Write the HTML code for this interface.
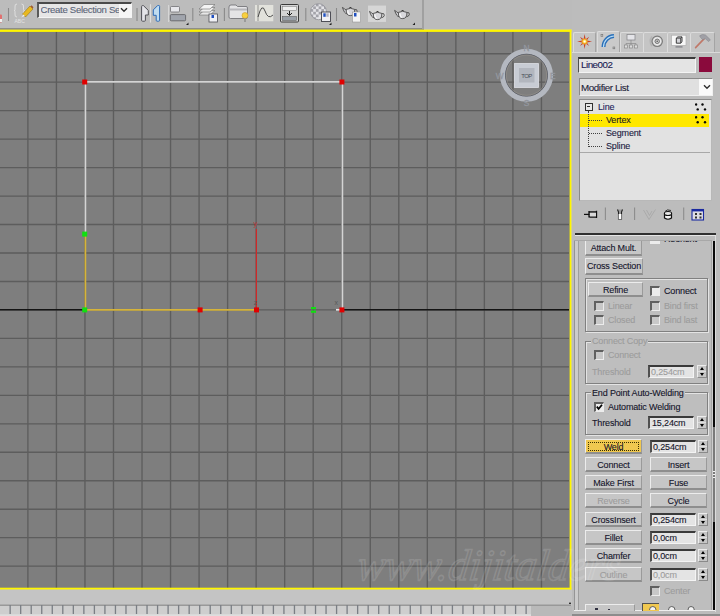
<!DOCTYPE html>
<html><head><meta charset="utf-8">
<style>
html,body{margin:0;padding:0;}
body{width:720px;height:616px;overflow:hidden;position:relative;background:#c3c3c3;font-family:"Liberation Sans",sans-serif;}
.a{position:absolute;}
.vp{position:absolute;left:0;top:0;}
.t{position:absolute;-webkit-text-stroke:0.1px currentColor;font-size:9px;letter-spacing:-0.15px;line-height:11px;white-space:nowrap;color:#14142a;}
.t.dis,.btn.dis{color:#9c9c9c;}
.lbl{background:#bebebe;padding:0 1px;}
.tab{position:absolute;background:#c5c5c5;border-top:1px solid #dcdcdc;border-left:1px solid #dcdcdc;border-right:1px solid #a4a4a4;border-radius:2px 2px 0 0;}
.tab.act{background:#cacaca;}
.fld{background:#e4e4e4;border-top:2px solid #3a3a3a;border-left:2px solid #505050;border-bottom:1px solid #f4f4f4;border-right:1px solid #f4f4f4;box-sizing:content-box;}
.btn{position:absolute;background:#c6c6c6;border-top:1px solid #ececec;border-left:1px solid #ececec;border-bottom:2px solid #8e8e8e;border-right:1px solid #9a9a9a;-webkit-text-stroke:0.1px currentColor;font-size:9px;letter-spacing:-0.15px;line-height:14px;text-align:center;color:#14142a;white-space:nowrap;overflow:hidden;}
.btn.weld{background:#f0c850;}
.btn.weld::after{content:"";position:absolute;left:2px;top:2px;right:2px;bottom:1px;border:1px dotted #3a3000;}
.grp{position:absolute;border:1px solid #808080;box-shadow:inset 1px 1px 0 #e4e4e4, 1px 1px 0 #e4e4e4;}
.chk{position:absolute;width:8px;height:8px;background:#c8c8c8;border-top:2px solid #606060;border-left:2px solid #606060;border-bottom:1px solid #ececec;border-right:1px solid #ececec;box-sizing:content-box;width:7px;height:7px;}
.chk.on{background:#ececec;}
.spn{position:absolute;width:8px;height:11px;background:#c6c6c6;border-top:1px solid #ececec;border-left:1px solid #ececec;border-right:1px solid #8a8a8a;border-bottom:1px solid #8a8a8a;}
.spn i{position:absolute;left:0;top:5px;width:8px;height:1px;background:#dedede;}
.spn::before{content:"";position:absolute;left:1.5px;top:1px;border-left:2.5px solid transparent;border-right:2.5px solid transparent;border-bottom:3px solid #000;}
.spn::after{content:"";position:absolute;left:1.5px;top:7px;border-left:2.5px solid transparent;border-right:2.5px solid transparent;border-top:3px solid #000;}

</style></head><body>
<div class="a" style="left:0;top:0;width:424px;height:29px;background:#bcbcbc;"></div>
<div class="a" style="left:0;top:28.3px;width:424px;height:1.4px;background:#8e8e88;"></div>
<div class="a" style="left:422px;top:0;width:1.5px;height:29px;background:#a0a0a0;"></div>
<div class="a" style="left:424px;top:0;width:148px;height:29px;background:#bbbbbb;"></div>
<svg class="a" style="left:0;top:0;" width="424" height="29" viewBox="0 0 424 29">
<rect x="-1" y="14.5" width="3" height="8" rx="1" fill="#e07070"/><rect x="-1" y="19" width="3" height="3" fill="#f0f0f0"/>
<g stroke="#8a8a8a" stroke-width="1.1"><line x1="8.5" y1="8" x2="8.5" y2="21"/><line x1="137" y1="8" x2="137" y2="21"/><line x1="168.6" y1="5" x2="168.6" y2="22" stroke="#d8d8d8"/><line x1="150.5" y1="4.2" x2="150.5" y2="22.6" stroke="#dedede"/><line x1="192.8" y1="8" x2="192.8" y2="21"/><line x1="224.4" y1="8" x2="224.4" y2="21"/><line x1="305.8" y1="8" x2="305.8" y2="21"/><line x1="336.5" y1="8" x2="336.5" y2="21"/></g>
<!-- braces ABC pencil -->
<path d="M17 4 Q14.5 4 15 7 V9.5 Q15 10.5 14 10.5 Q15 10.5 15 11.5 V14 Q14.5 17 17 17 M21.5 4 Q24 4 23.5 7 V9.5 Q23.5 10.5 24.5 10.5 Q23.5 10.5 23.5 11.5 V14 Q24 17 21.5 17" stroke="#e2e2e2" stroke-width="0.9" fill="none"/>
<text x="14.5" y="22.6" font-size="5" fill="#e4e4e4" font-family="Liberation Sans">ABC</text>
<path d="M22.5 14 L30 6 L33 9 L25.5 17 Z" fill="#e8b820" stroke="#8a6a10" stroke-width="0.5"/>
<path d="M30.5 6.5 L31.5 5.2 L33.5 7.2 L32.5 8.5 Z" fill="#a05a30"/>
<path d="M23 14.5 L22.5 16.5 L25 16 Z" fill="#f4f4f4"/>
<!-- mirror icons -->
<path d="M141.6 6.4 Q141.6 5.6 142.6 5.6 H143.4 L148.3 10.4 V15 H145.4 V20.3 Q145.4 21.2 144.5 21.2 H142.5 Q141.6 21.2 141.6 20.3 Z" fill="#e4e4e8" stroke="#505056" stroke-width="1"/>
<path d="M159.6 6.3 Q159.6 5.5 158.6 5.5 H157.7 L153.3 9.9 V15.3 H156.2 V20.3 Q156.2 21.2 157.1 21.2 H158.7 Q159.6 21.2 159.6 20.3 Z" fill="#c0dcf0" stroke="#2a6ab8" stroke-width="1"/>
<!-- align -->
<rect x="170.5" y="6.5" width="9" height="5.5" rx="1" fill="#e8e8ec" stroke="#707074" stroke-width="0.8"/>
<rect x="170.3" y="14.6" width="15.3" height="6.2" rx="1" fill="#a0a4ac" stroke="#5a5a60" stroke-width="0.8"/>
<path d="M186 25 L188.5 22.5 V25 Z" fill="#202020"/>
<!-- layers -->
<path d="M199 15 L204 10.5 H215 L210 15 Z" fill="#e8e8e8" stroke="#707070" stroke-width="0.6"/>
<path d="M199 12 L204 7.5 H215 L210 12 Z" fill="#f0f0f0" stroke="#707070" stroke-width="0.6"/>
<path d="M199 9 L204 4.5 H215 L210 9 Z" fill="#f4f4f4" stroke="#707070" stroke-width="0.6"/>
<rect x="209" y="14" width="8.5" height="8" fill="#f0f0f4" stroke="#505058" stroke-width="0.8"/>
<rect x="211.5" y="15" width="2.5" height="3" fill="#2050c0"/>
<!-- folder bulb -->
<path d="M229 7 Q229 5 231 5 H236 L237.5 6.5 H246 Q247.5 6.5 247.5 8 V17 Q247.5 18.5 246 18.5 H230.5 Q229 18.5 229 17 Z" fill="#e4e4e6" stroke="#6a6a6e" stroke-width="0.8"/>
<rect x="229.5" y="8.5" width="17.5" height="2" fill="#b8b8bc"/>
<circle cx="245" cy="15.5" r="3" fill="#f8d040" stroke="#c09020" stroke-width="0.5"/>
<rect x="244" y="18.5" width="2" height="3.5" fill="#9a9a9a"/>
<!-- curve editor -->
<rect x="255" y="5" width="18.3" height="16.3" fill="#e2e2dc"/>
<line x1="258" y1="5" x2="258" y2="21" stroke="#606060" stroke-width="0.6"/>
<path d="M258 17 Q262 2 265 11 Q268 20 273 15" stroke="#404040" stroke-width="0.9" fill="none"/>
<!-- schematic -->
<rect x="280.5" y="4.5" width="18" height="17.5" rx="1" fill="#d4d4d4" stroke="#3a3a3a" stroke-width="1"/>
<rect x="282.5" y="6.5" width="14" height="4" fill="#f0f0f0" stroke="#707070" stroke-width="0.5"/>
<rect x="282.5" y="16.5" width="14" height="4" fill="#9aa0a8" stroke="#505050" stroke-width="0.5"/>
<path d="M289.5 11 V15 M287 13 L289.5 15.5 L292 13" stroke="#202020" stroke-width="1" fill="none"/>
<!-- material sphere -->
<defs><clipPath id="sph"><circle cx="318.5" cy="11.7" r="8"/></clipPath></defs>
<circle cx="318.5" cy="11.7" r="8" fill="#e4e4e8"/>
<g clip-path="url(#sph)" fill="#8e8e96" opacity="0.75">
<rect x="310.5" y="3.7" width="2.7" height="2.7"/><rect x="315.9" y="3.7" width="2.7" height="2.7"/><rect x="321.3" y="3.7" width="2.7" height="2.7"/>
<rect x="313.2" y="6.4" width="2.7" height="2.7"/><rect x="318.6" y="6.4" width="2.7" height="2.7"/><rect x="324" y="6.4" width="2.7" height="2.7"/>
<rect x="310.5" y="9.1" width="2.7" height="2.7"/><rect x="315.9" y="9.1" width="2.7" height="2.7"/><rect x="321.3" y="9.1" width="2.7" height="2.7"/>
<rect x="313.2" y="11.8" width="2.7" height="2.7"/><rect x="318.6" y="11.8" width="2.7" height="2.7"/>
<rect x="310.5" y="14.5" width="2.7" height="2.7"/><rect x="315.9" y="14.5" width="2.7" height="2.7"/>
<rect x="313.2" y="17.2" width="2.7" height="2.7"/>
</g>
<circle cx="318.5" cy="11.7" r="8" fill="none" stroke="#8a8a90" stroke-width="0.7"/>
<rect x="321.5" y="12" width="9" height="9.5" fill="#f0f0f4" stroke="#404048" stroke-width="0.9"/>
<rect x="323.3" y="13.3" width="2.4" height="3.5" fill="#2050c0"/><rect x="326.3" y="13.3" width="2.4" height="3.5" fill="#b0b0c0"/>
<path d="M329 25 L331.5 22.5 V25 Z" fill="#202020"/>
<!-- teapots -->
<g transform="translate(341.8,3.8)"><path d="M4.6 6.5 Q2.8 5 0.6 3.6 Q1.6 6.5 2.8 8.5 Q3.8 9.8 5.2 10" stroke="#4a4a4a" stroke-width="0.9" fill="#d0d0d4"/><path d="M12.6 5.8 Q15.6 5 15.4 7.6 Q15 9.6 12.4 10" stroke="#4a4a4a" stroke-width="0.9" fill="none"/><path d="M4.4 5.6 Q4 11.8 8.6 11.8 Q13.2 11.8 12.9 5.6 Q8.6 3.4 4.4 5.6 Z" fill="#d8d8dc" stroke="#4a4a4a" stroke-width="0.9"/><path d="M6 6.5 Q5.8 9.8 8 10.8" stroke="#fafafa" stroke-width="1.1" fill="none"/><path d="M7.2 4.3 Q8.6 2.2 10 4.3 Z" fill="#303030"/></g>
<rect x="352.5" y="12" width="8" height="10" fill="#f4f4f4" stroke="#8a8a8a" stroke-width="0.5"/>
<rect x="354" y="13" width="2.5" height="3.5" fill="#2050c0"/>
<rect x="368" y="5.6" width="18" height="16.3" fill="#d6d6d6"/>
<g transform="translate(368.9,7.8)"><path d="M4.6 6.5 Q2.8 5 0.6 3.6 Q1.6 6.5 2.8 8.5 Q3.8 9.8 5.2 10" stroke="#4a4a4a" stroke-width="0.9" fill="#d0d0d4"/><path d="M12.6 5.8 Q15.6 5 15.4 7.6 Q15 9.6 12.4 10" stroke="#4a4a4a" stroke-width="0.9" fill="none"/><path d="M4.4 5.6 Q4 11.8 8.6 11.8 Q13.2 11.8 12.9 5.6 Q8.6 3.4 4.4 5.6 Z" fill="#d8d8dc" stroke="#4a4a4a" stroke-width="0.9"/><path d="M6 6.5 Q5.8 9.8 8 10.8" stroke="#fafafa" stroke-width="1.1" fill="none"/><path d="M7.2 4.3 Q8.6 2.2 10 4.3 Z" fill="#303030"/></g>
<g transform="translate(394,6.8)"><path d="M4.6 6.5 Q2.8 5 0.6 3.6 Q1.6 6.5 2.8 8.5 Q3.8 9.8 5.2 10" stroke="#4a4a4a" stroke-width="0.9" fill="#d0d0d4"/><path d="M12.6 5.8 Q15.6 5 15.4 7.6 Q15 9.6 12.4 10" stroke="#4a4a4a" stroke-width="0.9" fill="none"/><path d="M4.4 5.6 Q4 11.8 8.6 11.8 Q13.2 11.8 12.9 5.6 Q8.6 3.4 4.4 5.6 Z" fill="#d8d8dc" stroke="#4a4a4a" stroke-width="0.9"/><path d="M6 6.5 Q5.8 9.8 8 10.8" stroke="#fafafa" stroke-width="1.1" fill="none"/><path d="M7.2 4.3 Q8.6 2.2 10 4.3 Z" fill="#303030"/></g>
<path d="M412.5 25 L415 22.5 V25 Z" fill="#202020"/>
</svg>
<!-- dropdown -->
<div class="a" style="left:36.5px;top:2px;width:95px;height:16px;background:#e6e6e6;border-top:2px solid #4a4a4a;border-left:2px solid #5a5a5a;border-bottom:1px solid #f4f4f4;border-right:1px solid #f4f4f4;box-sizing:border-box;"><span class="t" style="left:2px;top:0px;color:#5a6478;font-size:9.6px;letter-spacing:-0.3px;width:78px;overflow:hidden;">Create Selection Se</span>
<div class="a" style="left:80px;top:0;width:13px;height:13px;background:#f6f6f6;"></div></div>
<svg class="a" style="left:120px;top:7px;" width="8" height="6" viewBox="0 0 8 6"><path d="M1 1.2 L4 4.2 L7 1.2" stroke="#303030" stroke-width="1.4" fill="none"/></svg>
<svg class="vp" width="720" height="616" viewBox="0 0 720 616">
<rect x="0" y="31" width="570" height="558" fill="#7e7e7e"/>
<g stroke="#5d5d5d" stroke-width="1.35">
<line x1="27.90" y1="31" x2="27.90" y2="588"/>
<line x1="56.43" y1="31" x2="56.43" y2="588"/>
<line x1="84.96" y1="31" x2="84.96" y2="588"/>
<line x1="113.49" y1="31" x2="113.49" y2="588"/>
<line x1="142.02" y1="31" x2="142.02" y2="588"/>
<line x1="170.55" y1="31" x2="170.55" y2="588"/>
<line x1="199.08" y1="31" x2="199.08" y2="588"/>
<line x1="227.61" y1="31" x2="227.61" y2="588"/>
<line x1="256.14" y1="31" x2="256.14" y2="588"/>
<line x1="284.67" y1="31" x2="284.67" y2="588"/>
<line x1="313.20" y1="31" x2="313.20" y2="588"/>
<line x1="341.73" y1="31" x2="341.73" y2="588"/>
<line x1="370.26" y1="31" x2="370.26" y2="588"/>
<line x1="398.79" y1="31" x2="398.79" y2="588"/>
<line x1="427.32" y1="31" x2="427.32" y2="588"/>
<line x1="455.85" y1="31" x2="455.85" y2="588"/>
<line x1="484.38" y1="31" x2="484.38" y2="588"/>
<line x1="512.91" y1="31" x2="512.91" y2="588"/>
<line x1="541.44" y1="31" x2="541.44" y2="588"/>
<line x1="0" y1="53.70" x2="569" y2="53.70"/>
<line x1="0" y1="82.17" x2="569" y2="82.17"/>
<line x1="0" y1="110.64" x2="569" y2="110.64"/>
<line x1="0" y1="139.11" x2="569" y2="139.11"/>
<line x1="0" y1="167.58" x2="569" y2="167.58"/>
<line x1="0" y1="196.05" x2="569" y2="196.05"/>
<line x1="0" y1="224.52" x2="569" y2="224.52"/>
<line x1="0" y1="252.99" x2="569" y2="252.99"/>
<line x1="0" y1="281.46" x2="569" y2="281.46"/>
<line x1="0" y1="309.93" x2="569" y2="309.93"/>
<line x1="0" y1="338.40" x2="569" y2="338.40"/>
<line x1="0" y1="366.87" x2="569" y2="366.87"/>
<line x1="0" y1="395.34" x2="569" y2="395.34"/>
<line x1="0" y1="423.81" x2="569" y2="423.81"/>
<line x1="0" y1="452.28" x2="569" y2="452.28"/>
<line x1="0" y1="480.75" x2="569" y2="480.75"/>
<line x1="0" y1="509.22" x2="569" y2="509.22"/>
<line x1="0" y1="537.69" x2="569" y2="537.69"/>
<line x1="0" y1="566.16" x2="569" y2="566.16"/>
</g>
<!-- x axis -->
<line x1="0" y1="309.8" x2="84" y2="309.8" stroke="#141414" stroke-width="1.6"/>
<line x1="342" y1="309.8" x2="569" y2="309.8" stroke="#141414" stroke-width="1.6"/>
<!-- shape -->
<g stroke-width="1.7" fill="none">
<line x1="85.4" y1="81.8" x2="342.2" y2="81.8" stroke="#d4d4d4"/>
<line x1="342.4" y1="81.8" x2="342.4" y2="309" stroke="#d4d4d4"/>
<line x1="85.4" y1="81.8" x2="85.4" y2="234" stroke="#d4d4d4"/>
<line x1="85.4" y1="234" x2="85.4" y2="310" stroke="#d6b43a"/>
<line x1="85.4" y1="309.8" x2="256" y2="309.8" stroke="#d6b43a"/>
<line x1="336" y1="309.8" x2="341" y2="309.8" stroke="#e8e8e8"/>
</g>
<line x1="256.4" y1="229" x2="256.4" y2="309" stroke="#d02828" stroke-width="1.2"/>
<g fill="#e00000">
<rect x="82.2" y="79.5" width="5" height="5"/>
<rect x="339.4" y="79.5" width="5" height="5"/>
<rect x="339.4" y="307.4" width="5" height="5"/>
<rect x="254" y="307.4" width="5" height="5"/>
<rect x="197.6" y="307.4" width="5" height="5"/>
</g>
<g fill="#10e010">
<rect x="82.2" y="231.6" width="5" height="5"/>
<rect x="82.2" y="307.4" width="5" height="5"/>
<rect x="311" y="307" width="5" height="2.2"/>
<rect x="311" y="310.6" width="5" height="2.2"/>
</g>
<g font-family="Liberation Sans" font-size="7">
<text x="253.5" y="225.5" fill="#c03030">y</text>
<text x="253.8" y="304.5" fill="#5a5a5a">z</text>
<text x="334.5" y="305" fill="#5a5a5a">x</text>
</g>

<!-- bottom time slider -->
<rect x="0" y="589.5" width="572" height="27" fill="#c4c4c4"/>
<rect x="0" y="605.6" width="531" height="8.6" fill="#cecece"/>
<rect x="531" y="605.6" width="41" height="10.4" fill="#b9b9b9"/>
<rect x="0" y="604.6" width="571" height="1.2" fill="#8e8e8e"/>
<rect x="0" y="614.2" width="531" height="2" fill="#dedede"/>
<g fill="#7a7e84"><rect x="9.50" y="605" width="1.3" height="9" /><rect x="20.03" y="605" width="1.3" height="9" /><rect x="30.56" y="605" width="1.3" height="9" /><rect x="41.09" y="605" width="1.3" height="9" /><rect x="51.62" y="605" width="1.3" height="9" /><rect x="62.15" y="605" width="1.3" height="9" /><rect x="72.68" y="605" width="1.3" height="9" /><rect x="83.21" y="605" width="1.3" height="9" /><rect x="93.74" y="605" width="1.3" height="9" /><rect x="104.27" y="605" width="1.3" height="9" /><rect x="114.80" y="605" width="1.3" height="9" /><rect x="125.33" y="605" width="1.3" height="9" /><rect x="135.86" y="605" width="1.3" height="9" /><rect x="146.39" y="605" width="1.3" height="9" /><rect x="156.92" y="605" width="1.3" height="9" /><rect x="167.45" y="605" width="1.3" height="9" /><rect x="177.98" y="605" width="1.3" height="9" /><rect x="188.51" y="605" width="1.3" height="9" /><rect x="199.04" y="605" width="1.3" height="9" /><rect x="209.57" y="605" width="1.3" height="9" /><rect x="220.10" y="605" width="1.3" height="9" /><rect x="230.63" y="605" width="1.3" height="9" /><rect x="241.16" y="605" width="1.3" height="9" /><rect x="251.69" y="605" width="1.3" height="9" /><rect x="262.22" y="605" width="1.3" height="9" /><rect x="272.75" y="605" width="1.3" height="9" /><rect x="283.28" y="605" width="1.3" height="9" /><rect x="293.81" y="605" width="1.3" height="9" /><rect x="304.34" y="605" width="1.3" height="9" /><rect x="314.87" y="605" width="1.3" height="9" /><rect x="325.40" y="605" width="1.3" height="9" /><rect x="335.93" y="605" width="1.3" height="9" /><rect x="346.46" y="605" width="1.3" height="9" /><rect x="356.99" y="605" width="1.3" height="9" /><rect x="367.52" y="605" width="1.3" height="9" /><rect x="378.05" y="605" width="1.3" height="9" /><rect x="388.58" y="605" width="1.3" height="9" /><rect x="399.11" y="605" width="1.3" height="9" /><rect x="409.64" y="605" width="1.3" height="9" /><rect x="420.17" y="605" width="1.3" height="9" /><rect x="430.70" y="605" width="1.3" height="9" /><rect x="441.23" y="605" width="1.3" height="9" /><rect x="451.76" y="605" width="1.3" height="9" /><rect x="462.29" y="605" width="1.3" height="9" /><rect x="472.82" y="605" width="1.3" height="9" /><rect x="483.35" y="605" width="1.3" height="9" /><rect x="493.88" y="605" width="1.3" height="9" /><rect x="504.41" y="605" width="1.3" height="9" /><rect x="514.94" y="605" width="1.3" height="9" /><rect x="525.47" y="605" width="1.3" height="9" /></g>
<rect x="569" y="602.6" width="2" height="1.4" fill="#303030"/>
<!-- viewcube -->
<g transform="translate(526.5,75.2)">
<circle r="23.8" fill="none" stroke="#b4b8c0" stroke-width="5.4"/>
<circle r="21" fill="none" stroke="#5a5e66" stroke-width="0.9"/>
<circle r="20.2" fill="none" stroke="#a09a90" stroke-width="0.5"/>
<rect x="-12" y="-11.6" width="24" height="23.8" fill="#c8ccd4" stroke="#e0e2e8" stroke-width="0.8"/>
<rect x="-7.5" y="-7.2" width="15.5" height="14.5" fill="#b2b6be"/>
<text x="0" y="2.8" font-size="6" text-anchor="middle" fill="#4a4e56" font-family="Liberation Sans" letter-spacing="-0.5">TOP</text>
<g font-family="Liberation Sans" font-size="8.4" fill="#9ea2aa" stroke="#8a8e96" stroke-width="0.3" text-anchor="middle">
<text x="0" y="-23.8">N</text><text x="0" y="30.4">S</text><text x="26.2" y="3.8">E</text><text x="-26.9" y="3.8">W</text>
</g>
</g>
<!-- yellow border -->
<g fill="#fff600">
<rect x="0" y="29.6" width="571.4" height="2.3"/>
<rect x="569.6" y="29.6" width="1.8" height="560"/>
<rect x="0" y="587.7" width="571.4" height="1.8"/>
</g>
</svg>

<div class="a" style="left:572px;top:0px;width:148px;height:616px;background:#bcbcbc;"></div>
<!-- tabs -->
<div class="tab" style="left:573px;top:32px;width:21px;height:19px;"></div>
<div class="tab act" style="left:597px;top:31px;width:21px;height:21px;"></div>
<div class="tab" style="left:620px;top:32px;width:22px;height:19px;"></div>
<div class="tab" style="left:643px;top:32px;width:23px;height:19px;"></div>
<div class="tab" style="left:667px;top:32px;width:22px;height:19px;"></div>
<div class="tab" style="left:690px;top:32px;width:23px;height:19px;"></div>
<div class="a" style="left:572px;top:52px;width:148px;height:1px;background:#dadada;"></div>
<svg class="a" style="left:572px;top:30px;" width="148" height="24" viewBox="572 30 148 24">
<!-- sun -->
<g transform="translate(584.6,41.4)">
<path d="M0 -7.5 L1 -2.2 L4.6 -4.6 L2.2 -1 L7.5 0 L2.2 1 L4.6 4.6 L1 2.2 L0 7.5 L-1 2.2 L-4.6 4.6 L-2.2 1 L-7.5 0 L-2.2 -1 L-4.6 -4.6 L-1 -2.2 Z" fill="#c84028"/>
<circle r="3" fill="#f0a020"/><circle r="1.8" fill="#fce060"/><circle r="1" fill="#ffffff"/>
</g>
<!-- arc -->
<path d="M603.5 47 A 11 11 0 0 1 614 36" stroke="#2a6fb8" stroke-width="4" fill="none"/>
<path d="M603.5 47 A 11 11 0 0 1 614 36" stroke="#b8dcf4" stroke-width="1.2" fill="none"/>
<rect x="601" y="34.5" width="1.8" height="1.8" fill="none" stroke="#707070" stroke-width="0.6"/>
<rect x="613" y="47" width="1.8" height="1.8" fill="none" stroke="#707070" stroke-width="0.6"/>
<!-- hierarchy -->
<rect x="627" y="34.5" width="8" height="5.5" fill="#e4e4e8" stroke="#8a8a8e" stroke-width="0.8"/>
<path d="M631 40 V43.5 M626 43.5 H636 M626 43.5 V45 M631 43.5 V45 M636 43.5 V45" stroke="#8a8a8a" stroke-width="0.7" fill="none"/>
<rect x="624.5" y="45" width="3" height="3" fill="#dcdcdc" stroke="#8a8a8a" stroke-width="0.7"/>
<rect x="629.5" y="45" width="3" height="3" fill="#dcdcdc" stroke="#8a8a8a" stroke-width="0.7"/>
<rect x="634.5" y="45" width="3" height="3" fill="#dcdcdc" stroke="#8a8a8a" stroke-width="0.7"/>
<!-- motion -->
<path d="M652 36.5 Q648.5 41.3 652 46.1" stroke="#b4b4b4" stroke-width="1.6" fill="none"/>
<circle cx="657.2" cy="41.3" r="5.2" fill="#d8d8d8" stroke="#7a7a7a" stroke-width="1.2"/>
<circle cx="657.2" cy="41.3" r="3.4" fill="none" stroke="#f4f4f4" stroke-width="0.8"/>
<circle cx="657.2" cy="41.3" r="2.2" fill="#d0d0d0" stroke="#6a6a6a" stroke-width="0.9"/>
<circle cx="657.2" cy="41.3" r="0.8" fill="#505050"/>
<!-- display -->
<rect x="671.6" y="35.2" width="14.4" height="10.2" fill="#f8f8f8" stroke="#b0b0b0" stroke-width="0.7"/>
<path d="M676.3 38.2 L677.8 36.9 H682 V41.8 L680.6 43.2 H676.3 Z" fill="#d4d4d8" stroke="#2a2a2a" stroke-width="0.9"/>
<path d="M676.3 38.2 H680.6 V43.2 M680.6 38.2 L682 36.9" stroke="#2a2a2a" stroke-width="0.7" fill="none"/>
<rect x="675.5" y="46.3" width="7" height="1.2" fill="#7a7a80"/>
<!-- hammer -->
<path d="M695.6 47.6 L704.2 38.6" stroke="#c07868" stroke-width="1.6" stroke-linecap="round"/>
<path d="M699.6 35.8 Q702.5 33.6 705.5 35 L710.4 39.8 L708.6 41.6 L705.2 38.6 L702.8 39.8 L700.6 37.6 Z" fill="#a0a0a6" stroke="#808086" stroke-width="0.5"/>
</svg>
<!-- name field -->
<div class="a fld" style="left:578px;top:57px;width:116px;height:13px;border-top-width:2px;border-left-width:1px;"><span class="t" style="left:2px;top:0px;color:#181850;font-size:9.8px;letter-spacing:-0.5px;">Line002</span></div>
<div class="a" style="left:699px;top:57px;width:13px;height:15px;background:#8a0a3c;"></div>
<!-- modifier list -->
<div class="a" style="left:579px;top:78px;width:132px;height:16px;background:#e0e0e0;border-top:1px solid #8a8a8a;border-left:1px solid #8a8a8a;border-bottom:1px solid #f0f0f0;border-right:1px solid #f0f0f0;"><span class="t" style="left:1px;top:3px;color:#1e1e38;font-size:9.8px;letter-spacing:-0.4px;">Modifier List</span>
<div class="a" style="left:119px;top:0;width:13px;height:16px;background:#fafafa;"></div></div>
<svg class="a" style="left:703px;top:84px;" width="8" height="6" viewBox="0 0 8 6"><path d="M1 1.2 L4 4.2 L7 1.2" stroke="#303030" stroke-width="1.4" fill="none"/></svg>
<!-- stack -->
<div class="a" style="left:579px;top:99px;width:131px;height:100px;background:#e2e2e2;border:1px solid #b8b8b8;border-top-color:#8a8a8a;border-left-color:#8a8a8a;"></div>
<div class="a" style="left:580px;top:114px;width:129px;height:13px;background:#ffe800;"></div>
<div class="a" style="left:580px;top:152px;width:130px;height:1px;background:#a8a8a8;"></div>
<div class="a" style="left:585px;top:103px;width:6px;height:6px;border:1px solid #303030;background:#e8e8e8;"></div>
<div class="a" style="left:587px;top:106px;width:3px;height:1px;background:#303030;"></div>
<div class="a" style="left:588px;top:111px;width:0;height:36px;border-left:1px dotted #404040;"></div>
<div class="a" style="left:589px;top:120px;width:13px;height:0;border-top:1px dotted #404040;"></div>
<div class="a" style="left:589px;top:133px;width:13px;height:0;border-top:1px dotted #404040;"></div>
<div class="a" style="left:589px;top:146px;width:13px;height:0;border-top:1px dotted #404040;"></div>
<span class="t" style="left:598px;top:102px;color:#1c1c58;">Line</span>
<span class="t" style="left:606px;top:115px;color:#202020;">Vertex</span>
<span class="t" style="left:606px;top:128px;color:#202040;">Segment</span>
<span class="t" style="left:606px;top:141px;color:#202040;">Spline</span>
<svg class="a" style="left:695px;top:103px;" width="14" height="24" viewBox="0 0 14 24" fill="#080808"><circle cx="1.1" cy="1.5" r="1.2"/><circle cx="7.5" cy="1.5" r="1.2"/><circle cx="2.7" cy="6.4" r="1.2"/><circle cx="10" cy="6.4" r="1.2"/><circle cx="1.1" cy="14.3" r="1.2"/><circle cx="7.5" cy="14.3" r="1.2"/><circle cx="2.7" cy="19.3" r="1.2"/><circle cx="10" cy="19.3" r="1.2"/></svg>
<!-- icon row -->
<svg class="a" style="left:580px;top:205px;" width="130" height="20" viewBox="580 205 130 20">
<g stroke="#8c8c8c" stroke-width="1.1"><line x1="605.4" y1="207.5" x2="605.4" y2="220"/><line x1="634.6" y1="207.5" x2="634.6" y2="220"/><line x1="683.7" y1="207.5" x2="683.7" y2="220"/></g>
<line x1="584" y1="214.4" x2="589.5" y2="214.4" stroke="#101010" stroke-width="1.2"/>
<path d="M589 211 V217.5 M589.5 212 H596 M589.5 217 H596 M596.5 210.8 V218" stroke="#101010" stroke-width="1.3" fill="none"/>
<rect x="590" y="212.8" width="6" height="3.6" fill="#d8d8d8"/>
<path d="M617.5 209.5 L618.5 212 V219 H621.5 V212 L622.5 209.5" stroke="#202020" stroke-width="1.1" fill="#9a9a9a"/>
<rect x="618.6" y="214" width="2.8" height="5" fill="#ffffff"/>
<path d="M643.5 210 L649 219.5 L655.5 209.5 M646.5 210 L649.5 215.5 L652 211" stroke="#a8a8a8" stroke-width="0.9" fill="none"/>
<path d="M664.5 214 V218 Q668 220.5 671.5 218 V214 Z" fill="#f4f4f4" stroke="#101010" stroke-width="1.2"/>
<ellipse cx="668" cy="213.5" rx="3.6" ry="2" fill="#e8e8e8" stroke="#101010" stroke-width="1.1"/>
<path d="M665 211.5 Q667 208.8 671 210.5" stroke="#202020" stroke-width="0.9" fill="none"/>
<rect x="692" y="209.5" width="11.5" height="10.5" fill="#dcdce4" stroke="#1a2aa0" stroke-width="1.1"/>
<rect x="692" y="209.2" width="11.5" height="2.2" fill="#1a2aa0"/>
<g fill="#303030"><rect x="695" y="213" width="2" height="2"/><rect x="699.5" y="213" width="2" height="2"/><rect x="695" y="216.5" width="2" height="2"/><rect x="699.5" y="216.5" width="2" height="2"/></g>
</svg>
<div class="a" style="left:575px;top:233px;width:141px;height:1.6px;background:#303030;"></div>
<div class="a" style="left:575px;top:235px;width:141px;height:1px;background:#e6e6e6;"></div>
<!-- rollout frame -->
<div class="a" style="left:574px;top:241px;width:1px;height:370px;background:#959595;"></div>
<div class="a" style="left:575px;top:241px;width:3px;height:370px;background:#cbcbcb;"></div>
<div class="a" style="left:578px;top:241px;width:1px;height:369px;background:#9e9e9e;"></div>
<div class="a" style="left:579px;top:241px;width:133px;height:369px;background:#bebebe;"></div>
<div class="a" style="left:711px;top:241px;width:1px;height:369px;background:#a4a4a4;"></div>
<div class="a" style="left:712px;top:241px;width:1px;height:369px;background:#cecece;"></div>
<div class="a" style="left:713px;top:241px;width:2px;height:186px;background:#0a0a0a;"></div>
<div class="a" style="left:713px;top:427px;width:2px;height:95px;background:#7a7a7a;"></div>
<div class="a" style="left:713px;top:471px;width:2px;height:1px;background:#f4f4f4;"></div>
<div class="a" style="left:713px;top:474px;width:2px;height:1px;background:#f4f4f4;"></div>
<div class="a" style="left:713px;top:477px;width:2px;height:1px;background:#f4f4f4;"></div>
<div class="a" style="left:713px;top:522px;width:2px;height:89px;background:#0a0a0a;"></div>
<div class="a" style="left:715px;top:236px;width:1px;height:376px;background:#dcdcdc;"></div>
<div class="a" style="left:574px;top:610px;width:141px;height:1px;background:#eeeeee;"></div>
<div class="a" style="left:572px;top:614px;width:148px;height:2px;background:#8c8c8c;"></div>
<!-- partial top row -->
<div class="a" style="left:574px;top:240px;width:138px;height:1px;background:#a8a8a8;"></div>
<div class="a" style="left:650px;top:241px;width:10px;height:2.5px;background:#ececec;"></div>
<div class="a" style="left:664px;top:241px;width:40px;height:3px;overflow:hidden;"><span class="t" style="left:0;top:-7.5px;">Reorient</span></div>
<!-- buttons -->
<div class="btn" style="left:585px;top:241px;width:55px;height:13px;border-top:none;line-height:14px;">Attach Mult.</div>
<div class="btn" style="left:585px;top:258px;width:56px;height:14px;">Cross Section</div>
<!-- refine group -->
<div class="grp" style="left:585px;top:278px;width:121px;height:52px;"></div>
<div class="btn" style="left:588px;top:282px;width:53px;height:12px;">Refine</div>
<div class="chk on" style="left:650px;top:286px;"></div><span class="t" style="left:664px;top:286px;">Connect</span>
<div class="chk" style="left:594px;top:301px;"></div><span class="t dis" style="left:608px;top:301px;">Linear</span>
<div class="chk" style="left:594px;top:315px;"></div><span class="t dis" style="left:608px;top:315px;">Closed</span>
<div class="chk" style="left:650px;top:301px;"></div><span class="t dis" style="left:664px;top:301px;">Bind first</span>
<div class="chk" style="left:650px;top:315px;"></div><span class="t dis" style="left:664px;top:315px;">Bind last</span>
<!-- connect copy -->
<div class="grp" style="left:585px;top:341px;width:121px;height:41px;"></div>
<span class="t dis lbl" style="left:591px;top:336px;">Connect Copy</span>
<div class="chk" style="left:594px;top:350px;"></div><span class="t dis" style="left:608px;top:350px;">Connect</span>
<span class="t dis" style="left:592px;top:367px;">Threshold</span>
<div class="a fld" style="left:648px;top:365px;width:43px;height:10px;"><span class="t dis" style="left:1px;top:0px;">0,254cm</span></div>
<div class="spn" style="left:697px;top:365px;"><i></i></div>
<!-- end point auto welding -->
<div class="grp" style="left:585px;top:392px;width:121px;height:41px;"></div>
<span class="t lbl" style="left:591px;top:388px;">End Point Auto-Welding</span>
<div class="chk on" style="left:594px;top:402px;"><svg width="10" height="10" viewBox="0 0 10 10" style="position:absolute;left:0;top:0"><path d="M0.8 2.6 L2.6 4.8 L6 0.8" stroke="#000" stroke-width="1.7" fill="none"/></svg></div><span class="t" style="left:608px;top:402px;">Automatic Welding</span>
<span class="t" style="left:592px;top:418px;">Threshold</span>
<div class="a fld" style="left:648px;top:416px;width:43px;height:10px;"><span class="t" style="left:2px;top:0px;">15,24cm</span></div>
<div class="spn" style="left:697px;top:416px;"><i></i></div>
<!-- weld -->
<div class="btn weld" style="left:585px;top:439px;width:55px;height:12px;">Weld</div>
<div class="a fld" style="left:650px;top:440px;width:43px;height:10px;"><span class="t" style="left:1px;top:0px;">0,254cm</span></div>
<div class="spn" style="left:698px;top:440px;"><i></i></div>
<div class="btn" style="left:585px;top:457px;width:55px;height:12px;">Connect</div>
<div class="btn" style="left:650px;top:457px;width:55px;height:12px;">Insert</div>
<div class="btn" style="left:585px;top:475px;width:55px;height:12px;">Make First</div>
<div class="btn" style="left:650px;top:475px;width:55px;height:12px;">Fuse</div>
<div class="btn dis" style="left:585px;top:493px;width:55px;height:12px;">Reverse</div>
<div class="btn" style="left:650px;top:493px;width:55px;height:12px;">Cycle</div>
<div class="btn" style="left:585px;top:512px;width:55px;height:12px;">CrossInsert</div>
<div class="a fld" style="left:650px;top:513px;width:43px;height:10px;"><span class="t" style="left:1px;top:0px;">0,254cm</span></div>
<div class="spn" style="left:698px;top:513px;"><i></i></div>
<div class="btn" style="left:585px;top:530px;width:55px;height:12px;">Fillet</div>
<div class="a fld" style="left:650px;top:531px;width:43px;height:10px;"><span class="t" style="left:1px;top:0px;">0,0cm</span></div>
<div class="spn" style="left:698px;top:531px;"><i></i></div>
<div class="btn" style="left:585px;top:548px;width:55px;height:12px;">Chamfer</div>
<div class="a fld" style="left:650px;top:549px;width:43px;height:10px;"><span class="t" style="left:1px;top:0px;">0,0cm</span></div>
<div class="spn" style="left:698px;top:549px;"><i></i></div>
<div class="btn dis" style="left:585px;top:567px;width:55px;height:12px;">Outline</div>
<div class="a fld" style="left:650px;top:568px;width:43px;height:10px;"><span class="t dis" style="left:1px;top:0px;">0,0cm</span></div>
<div class="spn" style="left:698px;top:568px;"><i></i></div>
<div class="chk" style="left:650px;top:586px;"></div><span class="t dis" style="left:664px;top:586px;">Center</span>
<div class="btn" style="left:585px;top:604px;width:48px;height:6px;border-bottom:none;"></div>
<div class="a" style="left:595px;top:608px;width:3px;height:2px;background:#303040;"></div>
<div class="a" style="left:608px;top:608.5px;width:2px;height:1.5px;background:#303040;"></div>
<div class="a" style="left:641.5px;top:602.5px;width:16.5px;height:7.5px;background:#f0c850;border-top:1px solid #505050;border-left:1px solid #505050;"></div>
<svg class="a" style="left:640px;top:600px;" width="72" height="10" viewBox="640 600 72 10"><g fill="#f4f4f4" stroke="#404040" stroke-width="0.8"><path d="M649.5 610 Q649.5 606.5 652.8 606.5 Q656 606.5 656 610"/><path d="M668.5 610 Q668.5 606.5 671.7 606.5 Q675 606.5 675 610"/><path d="M688 610 Q688 606.5 691 606.5 Q694.3 606.5 694.3 610"/></g></svg>

<svg class="a" style="left:0;top:0;pointer-events:none;" width="720" height="616" viewBox="0 0 720 616"><text x="0" y="0" font-family="Liberation Serif" font-style="italic" font-size="44" fill="none" stroke="#ffffff" stroke-opacity="0.13" stroke-width="1.6" letter-spacing="0" transform="translate(356,580) scale(0.95,1) skewX(-8)">www.dijitalders</text></svg>
</body></html>
